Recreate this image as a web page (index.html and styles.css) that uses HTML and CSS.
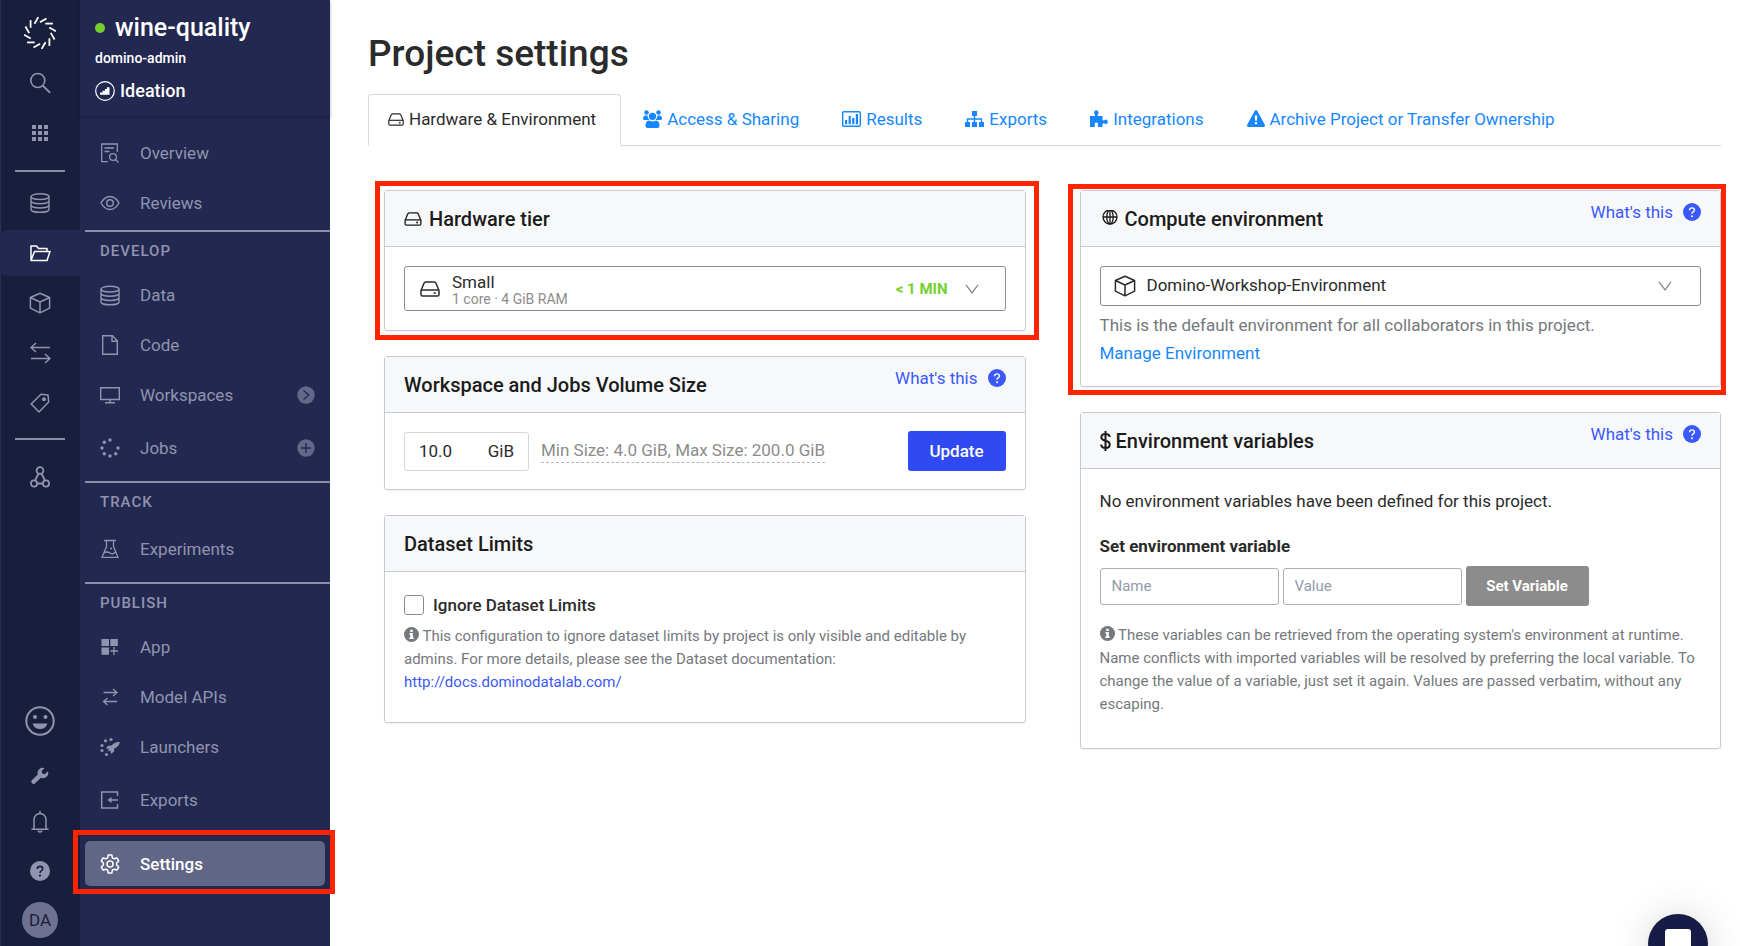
FILE: index.html
```html
<!DOCTYPE html>
<html lang="en">
<head>
<meta charset="utf-8">
<title>Project settings</title>
<link rel="stylesheet" href="styles.css">
</head>
<body>
<svg class="sprite" aria-hidden="true">
  <symbol id="database" viewBox="0 0 20 20"><g fill="none" stroke="currentColor" stroke-width="1.4"><ellipse cx="10" cy="3.6" rx="9" ry="2.9"/><path d="M1 3.6v12.8c0 1.6 4 2.9 9 2.9s9-1.3 9-2.9V3.6M1 7.8c0 1.6 4 2.9 9 2.9s9-1.3 9-2.9M1 12.1c0 1.6 4 2.9 9 2.9s9-1.3 9-2.9"/></g></symbol>
  <symbol id="cube" viewBox="0 0 22 22"><path d="M11 1.2l9.6 4.3v10.6L11 20.8l-9.6-4.7V5.5zM1.4 5.5L11 10l9.6-4.5M11 10v10.8" fill="none" stroke="currentColor" stroke-width="1.5" stroke-linejoin="round"/></symbol>
  <symbol id="drive" viewBox="0 0 20 16"><g fill="none" stroke="currentColor" stroke-width="1.5" stroke-linejoin="round"><path d="M1 9.5L4 2.2Q4.500 1 6 1h8q1.500 0 2 1.200L19 9.500v4q0 1.500-1.500 1.500h-15Q1 15 1 13.500z"/><path d="M1.200 9h17.600"/></g><circle cx="14.700" cy="12" r="1.100" fill="currentColor"/></symbol>
  <symbol id="question" viewBox="0 0 20 20"><circle cx="10" cy="10" r="10" fill="currentColor"/><path d="M7.300 8q0-2.600 2.700-2.600t2.700 2.400q0 1.300-1.500 2.100-1.200.7-1.200 2" fill="none" stroke="var(--mark)" stroke-width="1.600"/><circle cx="10" cy="14.600" r="1.100" fill="var(--mark)"/></symbol>
  <symbol id="info" viewBox="0 0 16 16"><circle cx="8" cy="8" r="8" fill="currentColor"/><path d="M6.700 3h2.600v2.300H6.700zM5.800 6.500h3.600v4.600h1v1.600H5.700v-1.600h1V8.100h-.9z" fill="#fff"/></symbol>
  <symbol id="chevron" viewBox="0 0 14 10"><path d="M1 .8l6 8 6-8" fill="none" stroke="#8a8a8a" stroke-width="1.300"/></symbol>
</svg>

<div class="shell">
  <nav class="rail" aria-label="Main">
    <a class="rail-item rail-logo" href="#" aria-label="Home"><svg width="34" height="34" viewBox="-17 -17 34 34"><g id="logo" stroke="#fff" stroke-width="1.800"><path id="dash" d="M5.300-9.400h7.600"/><use href="#dash" transform="rotate(30)"/><use href="#dash" transform="rotate(60)"/><use href="#dash" transform="rotate(90)"/><use href="#dash" transform="rotate(120)"/><use href="#dash" transform="rotate(150)"/><use href="#dash" transform="rotate(180)"/><use href="#dash" transform="rotate(210)"/><use href="#dash" transform="rotate(240)"/><use href="#dash" transform="rotate(270)"/><use href="#dash" transform="rotate(300)"/><use href="#dash" transform="rotate(330)"/></g></svg></a>
    <a class="rail-item" href="#" aria-label="Search"><svg width="22" height="22" viewBox="0 0 22 22"><g fill="none" stroke="currentColor"><circle cx="8.800" cy="8.500" r="7" stroke-width="1.600"/><path d="M13.800 13.600l7.400 7.300" stroke-width="2"/></g></svg></a>
    <a class="rail-item" href="#" aria-label="Apps"><svg width="18" height="18" viewBox="0 0 18 18" fill="currentColor"><path d="M1 1h4v4H1zM7 1h4v4H7zM13 1h4v4h-4zM1 7h4v4H1zM7 7h4v4H7zM13 7h4v4h-4zM1 13h4v4H1zM7 13h4v4H7zM13 13h4v4h-4z"/></svg></a>
    <div class="rail-group">
      <a class="rail-item" href="#" aria-label="Data"><svg width="20" height="22"><use href="#database"/></svg></a>
      <a class="rail-item rail-active" href="#" aria-label="Projects"><svg width="21" height="17" viewBox="0 0 21 17"><path d="M1 15.500V1h5.500l2 2.500H17v3M1 15.500L4.500 6.500H20l-3 9z" fill="none" stroke="#fff" stroke-width="1.500" stroke-linejoin="round"/></svg></a>
      <a class="rail-item" href="#" aria-label="Environments"><svg width="22" height="22"><use href="#cube"/></svg></a>
      <a class="rail-item" href="#" aria-label="Transfers"><svg width="21" height="22" viewBox="0 0 21 22"><path d="M20 5.500H1M6 1L1 5.500 6 10M1 16.500h19M15 12l5 4.500-5 4.500" fill="none" stroke="currentColor" stroke-width="1.500"/></svg></a>
      <a class="rail-item" href="#" aria-label="Tags"><svg width="20" height="20" viewBox="0 0 20 20"><path d="M11 1.200l7 .9.700 7L9 19 1.200 11z" fill="none" stroke="currentColor" stroke-width="1.500" stroke-linejoin="round"/><circle cx="14" cy="6.300" r="2" fill="currentColor"/></svg></a>
    </div>
    <a class="rail-item rail-models" href="#" aria-label="Models"><svg width="20" height="22" viewBox="0 0 20 22"><g fill="none" stroke="currentColor" stroke-width="1.800"><circle cx="10" cy="4.500" r="3.400"/><circle cx="4" cy="17.500" r="3.100"/><circle cx="16" cy="17.500" r="3.100"/><path d="M8.500 7.500L5 14.600M11.500 7.500l3.500 7.100M7 17.500h6"/></g></svg></a>
    <div class="rail-bottom">
      <a class="rail-item rail-smile" href="#" aria-label="Feedback"><svg width="30" height="30" viewBox="0 0 30 30"><circle cx="15" cy="15" r="13.700" fill="none" stroke="currentColor" stroke-width="2"/><circle cx="10" cy="11" r="2" fill="currentColor"/><circle cx="20.500" cy="11" r="2" fill="currentColor"/><path d="M7.500 17.500h15q-2 5.500-7.500 5.500t-7.500-5.500z" fill="currentColor"/></svg></a>
      <a class="rail-item rail-wrench" href="#" aria-label="Admin"><svg width="18" height="18" viewBox="0 0 18 18"><path d="M16.900 4.200l-3.200 3-2.500-.6-.6-2.500 3-3A5.200 5.200 0 0 0 6.800 7.500L.8 13.300q-1 1.200 0 2.800 1.500 1.600 3.100.4l6-5.700a5.200 5.200 0 0 0 7-6.600z" fill="currentColor"/></svg></a>
      <a class="rail-item" href="#" aria-label="Notifications"><svg width="18" height="22" viewBox="0 0 18 22"><path d="M9 0v2.500M3 18V8.500a6 6 0 0 1 12 0V18M.5 18.200h17M7 19.500q2 3 4 0" fill="none" stroke="currentColor" stroke-width="1.500"/></svg></a>
      <a class="rail-item" href="#" aria-label="Help"><svg width="20" height="20"><use href="#question"/></svg></a>
      <a class="rail-item" href="#" aria-label="Account"><span class="avatar">DA</span></a>
    </div>
  </nav>

  <nav class="menu" aria-label="Project">
    <header class="menu-head">
      <div class="project"><span class="dot"></span>wine-quality</div>
      <div class="owner">domino-admin</div>
      <div class="stage"><svg width="20" height="20" viewBox="0 0 20 20"><circle cx="10" cy="10" r="9.300" fill="none" stroke="#fff" stroke-width="1.200"/><path d="M5 13.700v-2.200h2.500V9.800H10V8h2V6.200h2.500v7.500z" fill="#fff"/></svg>Ideation</div>
    </header>
    <section class="menu-section menu-first">
      <a class="menu-item" href="#"><svg width="20" height="20" viewBox="0 0 20 20"><g fill="none" stroke="currentColor" stroke-width="1.300"><path d="M8 18.700H1.700V1h15.600v8M4.500 5h9.500M4.500 8.500h5"/><circle cx="13" cy="14" r="3.400"/><path d="M15.400 16.500l3 3"/></g></svg>Overview</a>
      <a class="menu-item" href="#"><svg width="20" height="20" viewBox="0 0 20 20"><g fill="none" stroke="currentColor" stroke-width="1.400"><path d="M1 10q3.500-6.500 9-6.500t9 6.500q-3.500 6.500-9 6.500T1 10z"/><circle cx="10" cy="10" r="3.300"/></g></svg>Reviews</a>
    </section>
    <section class="menu-section">
      <h2 class="menu-title">DEVELOP</h2>
      <a class="menu-item" href="#"><svg width="20" height="21"><use href="#database"/></svg>Data</a>
      <a class="menu-item" href="#"><svg width="20" height="20" viewBox="0 0 20 20"><path d="M2.700.8h9.800l4.800 5v13.500H2.700zM12 .8v5.500h5.300" fill="none" stroke="currentColor" stroke-width="1.400"/></svg>Code</a>
      <a class="menu-item" href="#"><svg width="20" height="20" viewBox="0 0 20 20"><path d="M.7 2.700h18.600v11.800H.7zM10 14.500v3M5 17.800h10" fill="none" stroke="currentColor" stroke-width="1.400"/></svg>Workspaces<svg class="menu-end" width="18" height="18" viewBox="0 0 18 18"><circle cx="9" cy="9" r="8.700" fill="#636888"/><path d="M6.500 4.500L11.700 9l-5.200 4.500" fill="none" stroke="#222850" stroke-width="1.400"/></svg></a>
      <a class="menu-item menu-apart" href="#"><svg width="20" height="20" viewBox="0 0 20 20" fill="currentColor"><circle cx="10" cy="2" r="1.700"/><circle cx="4.300" cy="4.300" r="1.700"/><circle cx="2" cy="10" r="1.700"/><circle cx="4.300" cy="15.700" r="1.700"/><circle cx="10" cy="18" r="1.700"/><circle cx="15.700" cy="15.700" r="1.700"/><circle cx="18" cy="10" r="1.700"/></svg>Jobs<svg class="menu-end" width="18" height="18" viewBox="0 0 18 18"><circle cx="9" cy="9" r="8.700" fill="#636888"/><path d="M9 4v10M4 9h10" fill="none" stroke="#222850" stroke-width="1.400"/></svg></a>
    </section>
    <section class="menu-section">
      <h2 class="menu-title">TRACK</h2>
      <a class="menu-item menu-apart" href="#"><svg width="20" height="20" viewBox="0 0 20 20"><g fill="none" stroke="currentColor" stroke-width="1.300"><path d="M4 1.500h12M6.500 1.500v6L2 18.300h16L13.500 7.500v-6M4 14q3-2 6 0t5.500-1"/></g><circle cx="11" cy="9.500" r="1" fill="currentColor"/></svg>Experiments</a>
    </section>
    <section class="menu-section menu-last">
      <h2 class="menu-title">PUBLISH</h2>
      <a class="menu-item" href="#"><svg width="20" height="20" viewBox="0 0 20 20"><path d="M1.500 2h7.500v7H1.500zM10.300 2h7.500v7h-7.500zM1.500 10.500h7.500v7.300H1.500z" fill="currentColor"/><path d="M14 10v8M10.300 14h7.700" stroke="currentColor" stroke-width="1.300"/></svg>App</a>
      <a class="menu-item" href="#"><svg width="20" height="20" viewBox="0 0 20 20"><path d="M3.500 5.500h13M13 2l4 3.500L13 9M17 14.500H4M7.500 11l-4 3.500 4 3.500" fill="none" stroke="currentColor" stroke-width="1.300"/></svg>Model APIs</a>
      <a class="menu-item" href="#"><svg width="20" height="20" viewBox="0 0 20 20" fill="currentColor"><circle cx="11" cy="2.500" r="1.600"/><circle cx="5.500" cy="3.800" r="1.600"/><circle cx="2" cy="8.500" r="1.600"/><circle cx="2" cy="13.500" r="1.600"/><circle cx="6.500" cy="17.500" r="1.600"/><path d="M19.800 5q-5-.5-8.300 3.500l-3.500.3-2 2.700 3 .5-1.500 2.500 3-1 .5 3.500 3-2.500.3-3Q19.500 9 19.800 5z"/></svg>Launchers</a>
      <a class="menu-item menu-apart" href="#"><svg width="20" height="20" viewBox="0 0 20 20"><path d="M17.500 6V2H1.700v16h15.800v-4M8.500 10H18" fill="none" stroke="currentColor" stroke-width="1.500"/><path d="M7.500 10l4-3v6z" fill="currentColor"/></svg>Exports</a>
      <a class="menu-item menu-current" href="#" aria-current="page"><svg width="20" height="20" viewBox="0 0 20 20"><g fill="none" stroke="currentColor" stroke-width="1.500" stroke-linejoin="round"><path d="M8.200 1h3.600l.6 2.800 1.800 1 2.700-.9 1.800 3.100-2.100 2v2l2.100 2-1.800 3.100-2.700-.9-1.800 1-.6 2.800H8.200l-.6-2.800-1.800-1-2.700.9L1.300 13l2.100-2V9l-2.100-2 1.800-3.100 2.700.9 1.800-1z"/><circle cx="10" cy="10" r="3"/></g></svg>Settings</a>
    </section>
  </nav>

  <main class="main">
    <h1 class="page-title">Project settings</h1>
    <div class="tabs">
      <a class="tab tab-active" href="#"><svg width="16" height="13"><use href="#drive"/></svg>Hardware &amp; Environment</a>
      <a class="tab" href="#"><svg width="19" height="18" viewBox="0 0 19 18" fill="currentColor"><circle cx="3.500" cy="2.500" r="2.300"/><circle cx="15.500" cy="2.500" r="2.300"/><circle cx="9.500" cy="6.300" r="3.600"/><path d="M2 5.500h2.500q.3 3.300 2 4.500H1.500Q0 10 0 8.500 0 6 2 5.500zM17 5.500h-2.500q-.3 3.300-2 4.500h5Q19 10 19 8.500 19 6 17 5.500zM6 10.500q3.500 2 7 0 3.500.5 3.500 5 0 2.500-2 2.500h-10q-2 0-2-2.500 0-4.500 3.500-5z"/></svg>Access &amp; Sharing</a>
      <a class="tab" href="#"><svg width="19" height="16" viewBox="0 0 19 16"><rect x=".7" y=".7" width="17.600" height="14.600" rx="1" fill="none" stroke="currentColor" stroke-width="1.400"/><path d="M3 9h2.200v4.300H3zM6.600 5h2.200v8.300H6.600zM10.200 7h2.200v6.300h-2.200zM13.800 3H16v10.300h-2.200z" fill="currentColor"/></svg>Results</a>
      <a class="tab" href="#"><svg width="19" height="16" viewBox="0 0 19 16"><path d="M7 0h5v5H7zM0 11h5v5H0zM7 11h5v5H7zM14 11h5v5h-5z" fill="currentColor"/><path d="M9.500 4v8M2.500 12V8h14v4" fill="none" stroke="currentColor" stroke-width="1.400"/></svg>Exports</a>
      <a class="tab" href="#"><svg width="18" height="17" viewBox="0 0 18 17"><path d="M0 6h4.500q1-.3.200-1.500Q3.500 2.500 4.700 1q1.500-1.600 3.200 0 1.200 1.500 0 3.500-.7 1.200.3 1.500h4.300v3.500q.5 1.500 2 .6 2.500-1.400 3.300 1.100.4 3.300-2.600 2.700-2.200-1.200-2.700.3V17H8.300q-1-.5-.4-2 .8-2.400-1.400-2.600-2.500.1-1.700 2.600.6 1.500-.5 2H0v-3z" fill="currentColor"/></svg>Integrations</a>
      <a class="tab" href="#"><svg width="18" height="17" viewBox="0 0 18 17"><path d="M9 0q.8 0 1.200.8l7.600 14Q18.300 16.800 17 17H1q-1.300-.2-.8-2.200l7.600-14Q8.200 0 9 0z" fill="currentColor"/><path d="M7.700 5.500h2.600l-.4 5.200H8.100zM7.900 12h2.200v2.300H7.900z" fill="#fff"/></svg>Archive Project or Transfer Ownership</a>
    </div>

    <div class="columns">
      <div class="column">
        <section class="card marked mark-hardware">
          <header class="card-head"><h2><svg width="18" height="14"><use href="#drive"/></svg><label for="tier">Hardware tier</label></h2></header>
          <div class="card-body">
            <div class="picker picker-tier">
              <select id="tier"><option>Small</option></select>
              <div class="picker-over"><svg width="20" height="16"><use href="#drive"/></svg><span class="spec">1 core · 4 GiB RAM</span><span class="wait">&lt; 1 MIN</span><svg width="14" height="10"><use href="#chevron"/></svg></div>
            </div>
          </div>
        </section>

        <section class="card">
          <header class="card-head"><h2>Workspace and Jobs Volume Size</h2><a class="whats" href="#">What's this<svg width="18" height="18"><use href="#question"/></svg></a></header>
          <div class="card-body volume">
            <label class="size"><input type="text" value="10.0" aria-label="Volume size">GiB</label>
            <span class="range">Min Size: 4.0 GiB, Max Size: 200.0 GiB</span>
            <button class="update" type="button">Update</button>
          </div>
        </section>

        <section class="card">
          <header class="card-head"><h2>Dataset Limits</h2></header>
          <div class="card-body limits">
            <label class="check"><input type="checkbox">Ignore Dataset Limits</label>
            <p class="note"><svg width="15" height="15"><use href="#info"/></svg> This configuration to ignore dataset limits by project is only visible and editable by admins. For more details, please see the Dataset documentation: <a href="#">http://docs.dominodatalab.com/</a></p>
          </div>
        </section>
      </div>

      <div class="column">
        <section class="card marked mark-compute">
          <header class="card-head"><h2><svg class="globe" width="18" height="18" viewBox="0 0 18 18"><g fill="none" stroke="currentColor" stroke-width="1.300"><circle cx="10" cy="7" r="7"/><ellipse cx="10" cy="7" rx="3.200" ry="7"/><path d="M3 7h14M10 0v14"/></g></svg><label for="env">Compute environment</label></h2><a class="whats" href="#">What's this<svg width="18" height="18"><use href="#question"/></svg></a></header>
          <div class="card-body compute">
            <div class="picker picker-env">
              <select id="env"><option>Domino-Workshop-Environment</option></select>
              <div class="picker-over"><svg width="22" height="22"><use href="#cube"/></svg><svg class="push" width="14" height="10"><use href="#chevron"/></svg></div>
            </div>
            <p class="default">This is the default environment for all collaborators in this project.</p>
            <a class="manage" href="#">Manage Environment</a>
          </div>
        </section>

        <section class="card">
          <header class="card-head"><h2><svg class="dollar" width="11" height="20" viewBox="0 0 11 20"><path d="M5.500 0v20M9.700 6Q9.500 3 5.500 3T1.300 6.300Q1.300 8.800 5.500 9.800T9.700 13.500Q9.700 17 5.500 17T1.200 13.500" fill="none" stroke="currentColor" stroke-width="2"/></svg>Environment variables</h2><a class="whats" href="#">What's this<svg width="18" height="18"><use href="#question"/></svg></a></header>
          <div class="card-body variables">
            <p class="none">No environment variables have been defined for this project.</p>
            <h3>Set environment variable</h3>
            <form class="var-form">
              <input type="text" placeholder="Name" aria-label="Name">
              <input type="text" placeholder="Value" aria-label="Value">
              <button type="button">Set Variable</button>
            </form>
            <p class="note"><svg width="15" height="15"><use href="#info"/></svg> These variables can be retrieved from the operating system's environment at runtime. Name conflicts with imported variables will be resolved by preferring the local variable. To change the value of a variable, just set it again. Values are passed verbatim, without any escaping.</p>
          </div>
        </section>
      </div>
    </div>
  </main>
</div>

<button class="chat" type="button" aria-label="Open chat"><span></span></button>
</body>
</html>
```
FILE: styles.css
```css
* { box-sizing: border-box; }
body { margin: 0; background: #fff; color: #2b2b2b; font: 17px/24px Roboto, "Liberation Sans", sans-serif; }
h1, h2, h3, p { margin: 0; }
a { color: inherit; text-decoration: none; }
input, select, button { font: inherit; color: inherit; }
svg { flex: none; display: block; }
.sprite { position: absolute; width: 0; height: 0; }
.shell { display: flex; height: 100vh; overflow: hidden; }

/* icon rail */
.rail { --mark: #1a1e3d; flex: none; width: 80px; display: flex; flex-direction: column; background: #1a1e3d; color: #9094ae; box-shadow: inset 1px 0 #2b2f4e; }
.rail-item { display: flex; align-items: center; justify-content: center; height: 50px; }
.rail-logo { height: 58px; padding-top: 8px; }
.rail-group { position: relative; margin-top: 12px; padding: 8px 0 12px; }
.rail-group::before, .rail-group::after { content: ""; position: absolute; left: 15px; right: 15px; height: 2px; background: #8b8fa9; }
.rail-group::before { top: 0; }
.rail-group::after { bottom: 0; }
.rail-active { height: 46px; margin: 2px 0; background: #222850; border-radius: 8px 0 0 8px; }
.rail-models { margin-top: 12px; }
.rail-bottom { margin-top: auto; padding-bottom: 2px; }
.rail-bottom .rail-item { height: 49px; }
.rail-bottom .rail-smile { height: 67px; }
.rail-bottom .rail-wrench { height: 43px; }
.avatar { width: 36px; height: 36px; border-radius: 50%; background: #6e7290; color: #1a1e3d; font-size: 17px; line-height: 36px; text-align: center; }

/* project menu */
.menu { flex: none; width: 250px; background: #222850; color: #9094ae; }
.menu-head { height: 116px; padding: 11px 15px 0; color: #fff; font-weight: 500; box-shadow: 0 2px 3px rgba(15, 18, 45, .35); }
.project { display: flex; align-items: center; gap: 10px; height: 34px; font-size: 25px; }
.dot { width: 10px; height: 10px; border-radius: 50%; background: #74d12c; }
.owner { height: 26px; font-size: 14px; line-height: 26px; }
.stage { display: flex; align-items: center; gap: 5px; height: 40px; font-size: 18px; }
.menu-section { margin-left: 5px; padding-bottom: 8px; border-bottom: 2px solid #8b8fa9; }
.menu-first { padding: 12px 0 2px; }
.menu-last { border: 0; }
.menu-title { padding-left: 15px; font-size: 15px; font-weight: 500; line-height: 38px; letter-spacing: 1px; }
.menu-item { display: flex; align-items: center; gap: 20px; height: 50px; padding: 0 15px; }
.menu-apart { margin-top: 3px; }
.menu-end { margin-left: auto; }
.menu-current { position: relative; height: 45px; margin: 16px 5px 0 0; border-radius: 5px; background: #616586; color: #fff; font-weight: 500; }
.menu-current::after { content: ""; position: absolute; z-index: 2; inset: -11px -10px -8px -12px; border: 5px solid #ff2400; }

/* page */
.main { flex: 1; min-width: 0; padding: 32px 19px 0 38px; }
.page-title { height: 62px; font-size: 37px; font-weight: 500; line-height: 44px; }
.tabs { display: flex; gap: 1px; height: 52px; border-bottom: 1px solid #d6d9dc; color: #1787ff; white-space: nowrap; }
.tab { display: flex; align-items: center; gap: 5px; height: 52px; padding: 0 21px 3px; }
.tab-active { padding: 1px 24px 3px 19px; border: 1px solid #d6d9dc; border-bottom-color: #fff; border-radius: 4px 4px 0 0; color: #2b2b2b; }
.columns { display: grid; grid-template-columns: 1fr 1fr; gap: 54px; padding: 44px 0 0 16px; }
.column { display: flex; flex-direction: column; gap: 25px; min-width: 0; }

/* cards */
.card { border: 1px solid #c5cbd1; border-radius: 3px; box-shadow: 0 1px 2px rgba(0, 0, 0, .06); }
.card-head { display: flex; justify-content: space-between; height: 56px; padding: 0 19px; background: #f7f8fa; border-bottom: 1px solid #c5cbd1; }
.card-head h2 { display: flex; align-items: center; gap: 7px; color: #1b1b1b; font-size: 20px; font-weight: 500; }
.card-head h2 .dollar { margin-right: -2px; }
.card-body { padding: 19px; }
.whats { --mark: #fff; display: flex; align-items: center; gap: 10px; height: 42px; color: #3b59fa; }
.marked { position: relative; }
.marked::after { content: ""; position: absolute; border: 5px solid #ff2400; pointer-events: none; }
.mark-hardware::after { inset: -10px -14px -10px -10px; }
.mark-compute::after { inset: -7px -6px -9px -13px; }

.picker { display: grid; }
.picker select { grid-area: 1 / 1; appearance: none; width: 100%; margin: 0; border: 1px solid #8c8c8c; border-radius: 3px; background: #fff; }
.picker-over { grid-area: 1 / 1; display: flex; align-items: center; z-index: 1; pointer-events: none; }
.picker-tier select { height: 45px; padding: 0 15px 14px 47px; }
.picker-tier .picker-over { padding: 0 27px 0 16px; }
.picker-env select { height: 40px; padding: 0 46px 2px; }
.picker-env .picker-over { padding: 0 29px 0 14px; }
.spec { align-self: flex-end; padding-left: 12px; color: #8c8c8c; font-size: 14px; line-height: 24px; }
.wait { margin: 0 17px 0 auto; color: #74d12c; font-size: 15px; font-weight: 700; }
.push { margin-left: auto; }

.volume { display: flex; align-items: center; padding: 18px 19px; }
.size { display: flex; align-items: center; width: 125px; height: 39px; padding: 0 14px; border: 1px solid #d6d6d6; border-radius: 3px; }
.size input { flex: 1; min-width: 0; padding: 0; border: 0; background: none; }
.range { margin-left: 12px; color: #8c8c8c; line-height: 23px; border-bottom: 1px dashed #b5b5b5; }
.update { width: 98px; height: 40px; margin-left: auto; border: 0; border-radius: 3px; background: #304af3; color: #fff; font-weight: 500; }

.limits { padding: 21px 19px 28px; }
.check { display: flex; align-items: center; gap: 9px; font-weight: 500; }
.check input { appearance: none; width: 20px; height: 20px; margin: 0; border: 1px solid #8c8c8c; border-radius: 3px; background: #fff; }
.note { color: #75787c; font-size: 15px; line-height: 23px; }
.note svg { display: inline-block; vertical-align: -1px; }
.note a { color: #3b59fa; }
.limits .note { margin-top: 8px; }

.compute { padding-bottom: 19px; }
.default { margin-top: 5px; color: #75787c; line-height: 28px; }
.manage { display: block; color: #1787ff; line-height: 28px; }

.variables { padding: 20px 19px 32px; }
.variables h3 { margin: 21px 0 8px; font-size: 17px; font-weight: 700; line-height: 24px; }
.var-form { display: flex; align-items: center; gap: 4px; font-size: 15px; }
.var-form input { width: 179px; height: 37px; padding: 0 11px; border: 1px solid #a9b0b8; border-radius: 3px; }
.var-form input::placeholder { color: #929bad; }
.var-form button { width: 123px; height: 40px; padding: 0; border: 0; border-radius: 3px; background: #8c8c8c; color: #fff; font-weight: 700; }
.variables .note { margin-top: 18px; }

.chat { position: fixed; right: 32px; bottom: -28px; width: 60px; height: 60px; padding: 15px 17px; border: 0; border-radius: 50%; background: #161c46; box-shadow: 0 1px 6px rgba(0, 0, 0, .06), 0 2px 40px rgba(0, 0, 0, .16); }
.chat span { display: block; width: 26px; height: 30px; border-radius: 3px; background: #fff; }
```
